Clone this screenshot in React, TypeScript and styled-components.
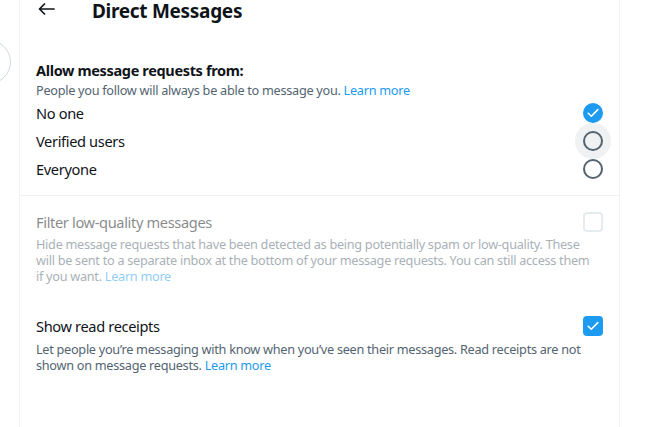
import React from "react";
import styled, { createGlobalStyle } from "styled-components";

const Global = createGlobalStyle`
  html, body { margin: 0; padding: 0; background: #fff; }
  body { font-family: "Noto Sans", "Open Sans", sans-serif; color: #0f1419; overflow: hidden; }
`;

const Page = styled.div`
  display: flex;
  width: 655px;
  height: 427px;
  background: #fff;
  overflow: hidden;
`;

const SideStrip = styled.div`
  width: 19px;
  flex: none;
  border-right: 1px solid #eff3f4;
  overflow: hidden;
`;

const SideCircle = styled.div`
  width: 44px;
  height: 44px;
  margin-top: 40px;
  margin-left: -33px;
  border-radius: 50%;
  border: 1px solid #cfd9de;
  box-sizing: border-box;
`;

const Main = styled.main`
  width: 600px;
  flex: none;
  border-right: 1px solid #eff3f4;
  box-sizing: border-box;
  display: flex;
  flex-direction: column;
`;

const Header = styled.header`
  height: 22px;
  display: flex;
  align-items: center;
  padding: 0 16px;
`;

const BackButton = styled.div`
  width: 20px;
  height: 20px;
  display: flex;
  align-items: center;
  justify-content: center;
  margin-top: -4px;
`;

const Title = styled.h1`
  margin: 0 0 0 36px;
  font-size: 19px;
  font-weight: 700;
  line-height: 22px;
  letter-spacing: -0.3px;
`;

const Section = styled.section`
  padding: 38px 16px 12px;
  border-bottom: 1px solid #eff3f4;
`;

const Heading = styled.h2`
  margin: 0;
  font-size: 14.5px;
  font-weight: 700;
  line-height: 20px;
  letter-spacing: -0.35px;
`;

const Sub = styled.p`
  margin: 2px 0 0;
  font-size: 12.7px;
  line-height: 17px;
  color: #536471;
  letter-spacing: -0.28px;
`;

const Link = styled.a`
  color: #1d9bf0;
  text-decoration: none;
`;

const OptionRow = styled.div`
  height: 28px;
  display: flex;
  align-items: center;
  justify-content: space-between;
  font-size: 14.6px;
  letter-spacing: -0.35px;
`;

const RadioWrap = styled.div<{ $hover?: boolean }>`
  width: 36px;
  height: 36px;
  margin-right: -8px;
  border-radius: 50%;
  display: flex;
  align-items: center;
  justify-content: center;
  background: ${(p) => (p.$hover ? "#eff1f2" : "transparent")};
`;

const Radio = styled.div<{ $checked?: boolean }>`
  width: 20px;
  height: 20px;
  border-radius: 50%;
  box-sizing: border-box;
  display: flex;
  align-items: center;
  justify-content: center;
  background: ${(p) => (p.$checked ? "#1d9bf0" : "transparent")};
  border: ${(p) => (p.$checked ? "none" : "2px solid #536471")};
`;

const Setting = styled.section<{ $disabled?: boolean; $top: number }>`
  padding: ${(p) => p.$top}px 16px 0;
  opacity: ${(p) => (p.$disabled ? 0.5 : 1)};
`;

const SettingHead = styled.div`
  height: 20px;
  display: flex;
  align-items: center;
  justify-content: space-between;
  font-size: 14.6px;
  letter-spacing: -0.35px;
`;

const Checkbox = styled.div<{ $checked?: boolean }>`
  width: 20px;
  height: 20px;
  border-radius: 4px;
  box-sizing: border-box;
  display: flex;
  align-items: center;
  justify-content: center;
  background: ${(p) => (p.$checked ? "#1d9bf0" : "transparent")};
  border: ${(p) => (p.$checked ? "none" : "2px solid #cfd9de")};
`;

const Desc = styled.p<{ $gap: number }>`
  margin: ${(p) => p.$gap}px 0 0;
  font-size: 12.7px;
  line-height: 16px;
  color: #536471;
  letter-spacing: -0.28px;
  white-space: nowrap;
`;

const Check = () => (
  <svg width="12" height="10" viewBox="0 0 12 10">
    <path d="M1.2 5.2 L4.3 8.2 L10.8 1.6" fill="none" stroke="#fff" strokeWidth="1.6" strokeLinecap="round" strokeLinejoin="round" />
  </svg>
);

const BackArrow = () => (
  <svg width="17" height="12" viewBox="0 0 17 12">
    <path d="M16 6 H1.5 M6.5 1 L1.5 6 L6.5 11" fill="none" stroke="#0f1419" strokeWidth="1.7" strokeLinecap="round" strokeLinejoin="round" />
  </svg>
);

const options = [
  { label: "No one", checked: true, hover: false },
  { label: "Verified users", checked: false, hover: true },
  { label: "Everyone", checked: false, hover: false },
];

export default function App() {
  return (
    <>
      <Global />
      <Page>
        <SideStrip>
          <SideCircle />
        </SideStrip>
        <Main>
          <Header>
            <BackButton>
              <BackArrow />
            </BackButton>
            <Title>Direct Messages</Title>
          </Header>
          <Section>
            <Heading>Allow message requests from:</Heading>
            <Sub>
              People you follow will always be able to message you. <Link>Learn more</Link>
            </Sub>
            {options.map((o) => (
              <OptionRow key={o.label}>
                <span>{o.label}</span>
                <RadioWrap $hover={o.hover}>
                  <Radio $checked={o.checked}>{o.checked && <Check />}</Radio>
                </RadioWrap>
              </OptionRow>
            ))}
          </Section>
          <Setting $disabled $top={16}>
            <SettingHead>
              <span>Filter low-quality messages</span>
              <Checkbox />
            </SettingHead>
            <Desc $gap={4}>
              Hide message requests that have been detected as being potentially spam or low-quality. These
              <br />
              will be sent to a separate inbox at the bottom of your message requests. You can still access them
              <br />
              if you want. <Link>Learn more</Link>
            </Desc>
          </Setting>
          <Setting $top={32}>
            <SettingHead>
              <span>Show read receipts</span>
              <Checkbox $checked>
                <Check />
              </Checkbox>
            </SettingHead>
            <Desc $gap={5}>
              Let people you’re messaging with know when you’ve seen their messages. Read receipts are not
              <br />
              shown on message requests. <Link>Learn more</Link>
            </Desc>
          </Setting>
        </Main>
      </Page>
    </>
  );
}
